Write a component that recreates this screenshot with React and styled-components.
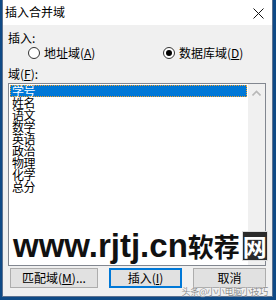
import React from "react";
import styled, { createGlobalStyle } from "styled-components";

const Global = createGlobalStyle`
  html, body { margin: 0; padding: 0; }
  body {
    width: 276px;
    height: 300px;
    overflow: hidden;
    background: #0f4a86;
    font-family: "Noto Sans CJK SC", "Noto Sans", sans-serif;
    font-size: 12px;
    color: #000;
  }
`;

const Window = styled.div`
  position: relative;
  margin-left: 2px;
  width: 271px;
  height: 297px;
  box-sizing: border-box;
  border: 1px solid #5d7290;
  border-top: none;
  background: #f0f0f0;
  display: flex;
  flex-direction: column;
`;

const TitleBar = styled.div`
  height: 25px;
  flex: none;
  background: #fff;
  display: flex;
  align-items: center;
  justify-content: space-between;
  padding: 0 8px 0 2px;
`;

const Title = styled.span`
  font-size: 12px;
  line-height: 14px;
  margin-top: -1px;
`;

const Close = styled.svg`
  width: 11px;
  height: 11px;
  margin-top: 2px;
`;

const Body = styled.div`
  flex: 1;
  display: flex;
  flex-direction: column;
  padding: 6px 6px 8px 5px;
`;

const Label = styled.div`
  line-height: 14px;
  height: 14px;
  margin-top: ${(p) => p.$mt || 0}px;
  white-space: nowrap;
`;

const Key = styled.span`
  text-decoration: underline;
  text-underline-offset: 1px;
`;

const RadioRow = styled.div`
  display: flex;
  align-items: center;
  height: 14px;
  margin-top: 1px;
  padding-left: 20px;
`;

const RadioItem = styled.label`
  display: flex;
  align-items: center;
  gap: 4px;
  width: ${(p) => p.$w || "auto"};
  line-height: 14px;
  white-space: nowrap;
`;

const Circle = styled.span`
  width: 12px;
  height: 12px;
  box-sizing: border-box;
  border: 1px solid #333;
  border-radius: 50%;
  background: #fff;
  display: flex;
  align-items: center;
  justify-content: center;
  &::after {
    content: "";
    width: 6px;
    height: 6px;
    border-radius: 50%;
    background: ${(p) => (p.$checked ? "#000" : "transparent")};
  }
`;

const ListBox = styled.div`
  margin-top: 2px;
  height: 183px;
  box-sizing: border-box;
  border: 1px solid #828790;
  background: #fff;
  display: flex;
`;

const List = styled.div`
  flex: 1;
  padding: 1px;
`;

const Item = styled.div`
  height: 12px;
  line-height: 12px;
  padding-left: 2px;
  box-sizing: border-box;
  background: ${(p) => (p.$sel ? "#0078d7" : "transparent")};
  color: ${(p) => (p.$sel ? "#fff" : "#000")};
  outline: ${(p) => (p.$sel ? "1px dotted #f0a030" : "none")};
  outline-offset: -1px;
  letter-spacing: -0.5px;
`;

const ScrollBar = styled.div`
  width: 17px;
  flex: none;
  background: #f0f0f0;
  display: flex;
  flex-direction: column;
  justify-content: space-between;
  align-items: center;
  padding: 6px 0;
`;

const Chevron = styled.svg`
  width: 9px;
  height: 6px;
`;

const ButtonRow = styled.div`
  margin-top: 2px;
  display: flex;
  gap: 11px;
  padding-left: 2px;
`;

const Button = styled.div`
  width: ${(p) => p.$w}px;
  height: 20px;
  box-sizing: border-box;
  background: #e1e1e1;
  border: ${(p) => (p.$focus ? "2px solid #0078d7" : "1px solid #adadad")};
  display: flex;
  align-items: center;
  justify-content: center;
  line-height: 14px;
  white-space: nowrap;
`;

const Watermark = styled.div`
  position: absolute;
  left: 10px;
  top: 229px;
  display: flex;
  align-items: center;
  pointer-events: none;
`;

const Latin = styled.span`
  font-family: "Liberation Sans", Arial, sans-serif;
  font-weight: bold;
  font-size: 33px;
  line-height: 34px;
  color: #111;
`;

const Han = styled.span`
  font-family: "Noto Sans CJK SC", sans-serif;
  font-weight: bold;
  font-size: 26px;
  line-height: 34px;
  color: #111;
`;

const HanBox = styled.span`
  margin-left: 2px;
  font-family: "Noto Sans CJK SC", sans-serif;
  font-weight: bold;
  font-size: 24px;
  line-height: 28px;
  height: 30px;
  width: 26px;
  display: flex;
  align-items: center;
  justify-content: center;
  background: #2b2b2b;
  color: #fff;
  border: 1px solid #ddd;
  box-sizing: border-box;
`;

const Credit = styled.div`
  position: absolute;
  right: 4px;
  bottom: -1px;
  font-size: 9px;
  line-height: 11px;
  color: #8a8a8a;
  text-shadow: 0 0 1px #fff, 0 0 1px #fff;
  letter-spacing: -0.3px;
  pointer-events: none;
`;

const items = ["学号", "姓名", "语文", "数学", "英语", "政治", "物理", "化学", "总分"];

export default function App() {
  return (
    <>
      <Global />
      <Window>
        <TitleBar>
          <Title>插入合并域</Title>
          <Close viewBox="0 0 11 11">
            <path d="M0.5 0.5 L10.5 10.5 M10.5 0.5 L0.5 10.5" stroke="#111" strokeWidth="1" fill="none" />
          </Close>
        </TitleBar>
        <Body>
          <Label>插入:</Label>
          <RadioRow>
            <RadioItem $w="135px">
              <Circle />
              <span>
                地址域(<Key>A</Key>)
              </span>
            </RadioItem>
            <RadioItem>
              <Circle $checked />
              <span>
                数据库域(<Key>D</Key>)
              </span>
            </RadioItem>
          </RadioRow>
          <Label $mt={7}>
            域(<Key>F</Key>):
          </Label>
          <ListBox>
            <List>
              {items.map((t, i) => (
                <Item key={t} $sel={i === 0}>
                  {t}
                </Item>
              ))}
            </List>
            <ScrollBar>
              <Chevron viewBox="0 0 9 6">
                <path d="M0.5 5.5 L4.5 1.5 L8.5 5.5" stroke="#b8b8b8" strokeWidth="1.6" fill="none" />
              </Chevron>
              <Chevron viewBox="0 0 9 6">
                <path d="M0.5 0.5 L4.5 4.5 L8.5 0.5" stroke="#b8b8b8" strokeWidth="1.6" fill="none" />
              </Chevron>
            </ScrollBar>
          </ListBox>
          <ButtonRow>
            <Button $w={88}>
              匹配域(<Key>M</Key>)...
            </Button>
            <Button $w={73} $focus>
              插入(<Key>I</Key>)
            </Button>
            <Button $w={73}>取消</Button>
          </ButtonRow>
        </Body>
        <Watermark>
          <Latin>www.rjtj.cn</Latin>
          <Han>软荐</Han>
          <HanBox>网</HanBox>
        </Watermark>
        <Credit>头条@小小电脑小技巧</Credit>
      </Window>
    </>
  );
}
